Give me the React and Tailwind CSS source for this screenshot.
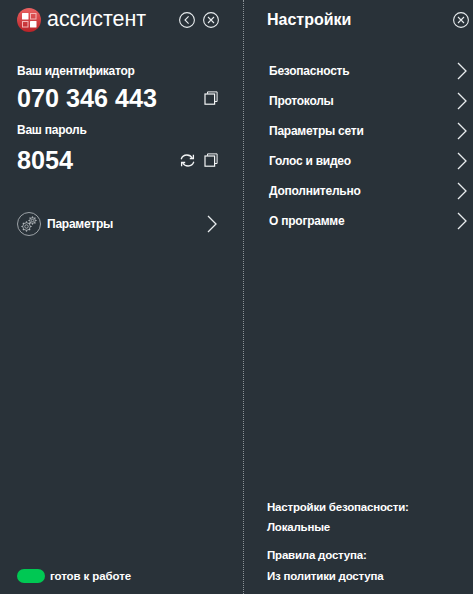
const SETTINGS = ['Безопасность', 'Протоколы', 'Параметры сети', 'Голос и видео', 'Дополнительно', 'О программе'];

function CircleIcon({ type }) {
  return (
    <svg width="16" height="16" viewBox="0 0 16 16" fill="none" stroke="#e8ecee" strokeWidth="1.1">
      <circle cx="8" cy="8" r="7.4" />
      {type === 'back' ? (
        <path d="M9.6 4.4 6 8l3.6 3.6" />
      ) : (
        <path d="M5 5l6 6M11 5l-6 6" />
      )}
    </svg>
  );
}

function CopyIcon() {
  return (
    <svg width="14" height="14" viewBox="0 0 14 14" fill="none" stroke="#f2f4f5" strokeWidth="1.2">
      <path d="M3.5 2.8V.9h9.6v9.6h-2.2" strokeWidth="1" />
      <rect x="1" y="3" width="9.6" height="10.2" />
    </svg>
  );
}

function RefreshIcon() {
  return (
    <svg width="15" height="15" viewBox="0 0 15 15" fill="none" stroke="#f2f4f5" strokeWidth="1.3">
      <path d="M1.2 6.2C2 3.6 4.3 2 6.9 2c2.3 0 4.200 1 5.300 3" />
      <path d="M13.400 1.800v3.700H9.800" />
      <path d="M13.800 8.800C13 11.400 10.700 13 8.100 13c-2.300 0-4.200-1-5.300-3" />
      <path d="M1.600 13.200V9.500h3.600" />
    </svg>
  );
}

function Logo() {
  return (
    <svg width="24" height="24" viewBox="0 0 24 24" className="shrink-0">
      <defs>
        <linearGradient id="logo" x1="0" y1="0" x2="0" y2="1">
          <stop offset="0" stopColor="#ea6262" />
          <stop offset="1" stopColor="#b82227" />
        </linearGradient>
      </defs>
      <circle cx="12" cy="12" r="12" fill="url(#logo)" />
      <rect x="5" y="5" width="6.500" height="6.500" rx="0.500" fill="#fff" />
      <rect x="13.500" y="5.500" width="5.500" height="5.500" fill="none" stroke="#f4b5b5" />
      <rect x="5.500" y="13.500" width="5.500" height="5.500" fill="none" stroke="#f4b5b5" />
      <rect x="13" y="13" width="6.500" height="6.500" rx="0.500" fill="#fff" />
    </svg>
  );
}

function Gear({ cx, cy, r }) {
  const teeth = [];
  for (let i = 0; i < 8; i++) {
    const a = (i * Math.PI) / 4;
    teeth.push(
      <line key={i} x1={cx + Math.cos(a) * r} y1={cy + Math.sin(a) * r} x2={cx + Math.cos(a) * (r + 1.300)} y2={cy + Math.sin(a) * (r + 1.300)} strokeWidth="1.200" />
    );
  }
  return (
    <g>
      <circle cx={cx} cy={cy} r={r} />
      <circle cx={cx} cy={cy} r={r * 0.45} />
      {teeth}
    </g>
  );
}

function GearsIcon() {
  return (
    <svg width="24" height="24" viewBox="0 0 24 24" fill="none" stroke="#b9bec2" strokeWidth="0.800" className="shrink-0">
      <circle cx="12" cy="12" r="11.500" />
      <Gear cx={9.500} cy={14.500} r={3.800} />
      <Gear cx={15.500} cy={8.500} r={2.800} />
    </svg>
  );
}

function Arrow() {
  return (
    <svg width="10" height="18" viewBox="0 0 10 18" fill="none" stroke="#e8ecee" strokeWidth="1.300" className="shrink-0">
      <path d="M1 1l8 8-8 8" />
    </svg>
  );
}

export default function App() {
  return (
    <div className="flex h-[594px] w-[473px] overflow-hidden bg-[#293239] font-['Liberation_Sans',Arial,sans-serif] text-[12px] font-bold tracking-[-0.24px] text-white">
      <div className="flex w-[244px] shrink-0 flex-col border-r border-dotted border-r-[#8b9297] pr-[24px] pl-[17px]">
        <div className="mt-[8px] flex h-[24px] items-center">
          <Logo />
          <span className="ml-[6px] text-[21.400px] leading-none font-normal tracking-normal">ассистент</span>
          <div className="ml-auto flex gap-[8px]">
            <CircleIcon type="back" />
            <CircleIcon type="close" />
          </div>
        </div>
        <div className="mt-[32px] leading-[14px]">Ваш идентификатор</div>
        <div className="mt-[7px] flex h-[28px] items-center justify-between">
          <span className="text-[25.200px] leading-none tracking-normal">070 346 443</span>
          <div className="mr-[1px] -translate-y-[1px]">
            <CopyIcon />
          </div>
        </div>
        <div className="mt-[10px] leading-[14px]">Ваш пароль</div>
        <div className="mt-[10px] flex h-[28px] items-center">
          <span className="text-[25.200px] leading-none tracking-normal">8054</span>
          <div className="mr-[1px] ml-auto flex -translate-y-[1px] items-center gap-[9px]">
            <RefreshIcon />
            <CopyIcon />
          </div>
        </div>
        <div className="mt-[37px] flex h-[24px] items-center">
          <GearsIcon />
          <span className="ml-[6px]">Параметры</span>
          <div className="mr-[2px] ml-auto">
            <Arrow />
          </div>
        </div>
        <div className="mt-auto mb-[11px] flex items-center">
          <span className="h-[14px] w-[28px] rounded-full bg-[#00c853]" />
          <span className="ml-[5px] text-[11.500px] leading-[14px] tracking-[-0.1px]">готов к работе</span>
        </div>
      </div>
      <div className="flex min-w-0 flex-1 flex-col pr-[4px] pl-[23px]">
        <div className="mt-[8px] flex h-[24px] items-center justify-between">
          <span className="text-[16px] tracking-normal">Настройки</span>
          <CircleIcon type="close" />
        </div>
        <div className="mt-[28px] flex flex-col gap-[8px] pr-[2px] pl-[2px]">
          {SETTINGS.map((s) => (
            <div key={s} className="flex h-[22px] items-center justify-between">
              <span>{s}</span>
              <Arrow />
            </div>
          ))}
        </div>
        <div className="mt-auto mb-[11px] flex flex-col text-[11.500px] leading-[14px] tracking-[-0.2px]">
          <span>Настройки безопасности:</span>
          <span className="mt-[6px]">Локальные</span>
          <span className="mt-[14px]">Правила доступа:</span>
          <span className="mt-[7px]">Из политики доступа</span>
        </div>
      </div>
    </div>
  );
}
